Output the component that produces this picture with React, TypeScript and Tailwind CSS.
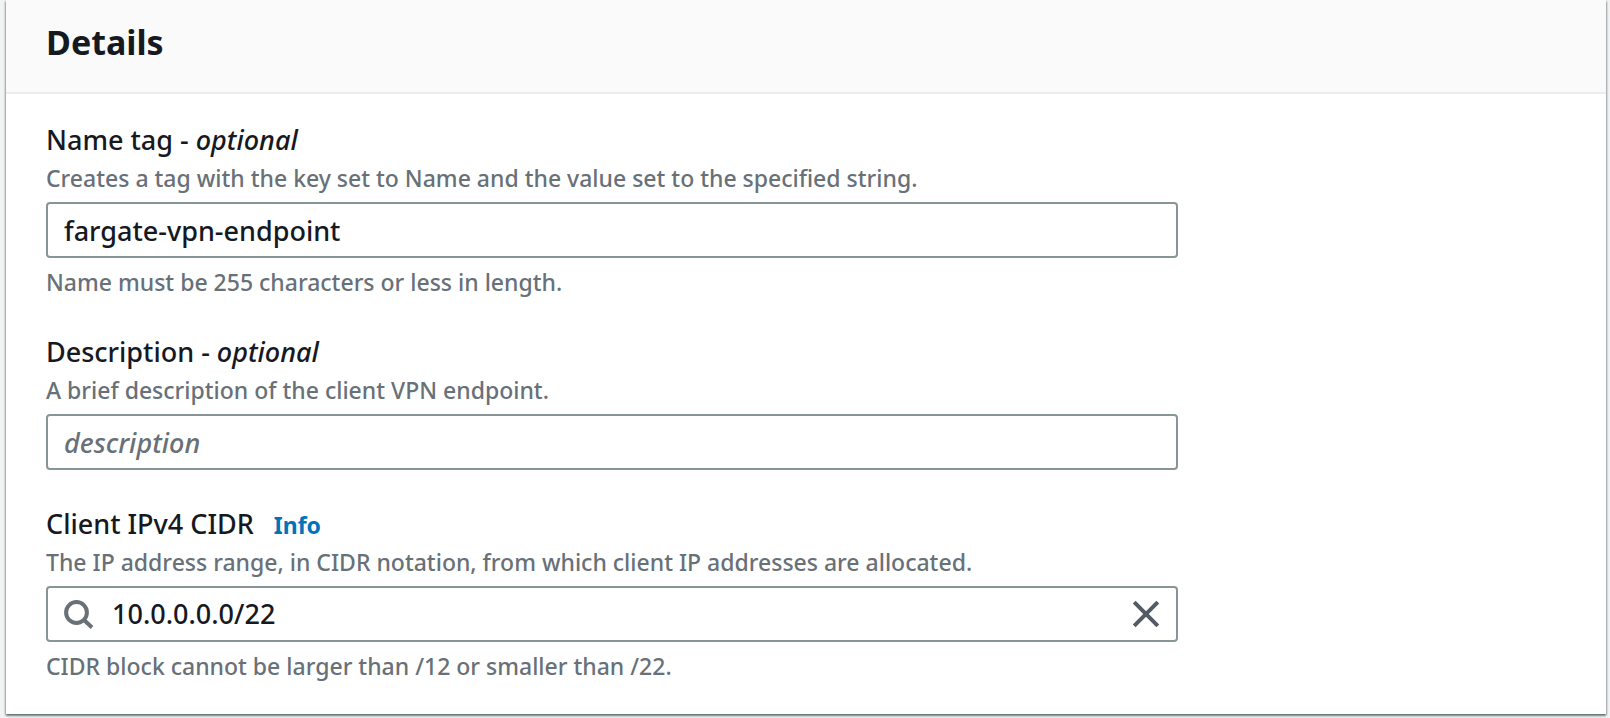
import { useState, type ReactNode } from "react";

const inputClass =
  "h-14 w-full rounded-[4px] border-2 border-[#879596] bg-white px-4 text-[27px] leading-9 font-medium text-[#16191f] outline-none placeholder:italic placeholder:text-[#687078] placeholder:opacity-100 focus:border-[#00a1c9]";

function SearchIcon() {
  return (
    <svg viewBox="0 0 32 32" className="size-8" fill="none" stroke="#687078" strokeWidth="4" aria-hidden="true">
      <circle cx="12.5" cy="14.5" r="10.4" />
      <path d="M19.5 21.5l8.5 8" />
    </svg>
  );
}

function CloseIcon() {
  return (
    <svg viewBox="0 0 32 32" className="size-8" fill="none" stroke="#545b64" strokeWidth="4" aria-hidden="true">
      <path d="M6.2 4.2l23.6 23.6M29.8 4.2L6.2 27.8" />
    </svg>
  );
}

type FieldProps = {
  id: string;
  label: string;
  optional?: boolean;
  info?: boolean;
  hint: string;
  constraint?: string;
  children: ReactNode;
};

function Field({ id, label, optional, info, hint, constraint, children }: FieldProps) {
  return (
    <div className="flex flex-col">
      <div className="flex h-11 items-baseline gap-5 leading-[44px]">
        <label htmlFor={id} className="text-[27px] font-medium text-[#16191f]">
          {label}
          {optional && (
            <>
              {" - "}
              <i>optional</i>
            </>
          )}
        </label>
        {info && (
          <a href="#info" className="text-[23px] font-bold text-[#0073bb] hover:underline">
            Info
          </a>
        )}
      </div>
      <p className="mb-2 text-[23px] leading-8 font-medium text-[#687078]">{hint}</p>
      {children}
      {constraint && (
        <p className="mt-2 text-[23px] leading-8 font-medium text-[#687078]">{constraint}</p>
      )}
    </div>
  );
}

export default function App() {
  const [name, setName] = useState("fargate-vpn-endpoint");
  const [description, setDescription] = useState("");
  const [cidr, setCidr] = useState("10.0.0.0.0/22");

  return (
    <main className="min-h-screen bg-[#f2f3f3] pr-1 pb-1 pl-1.5 font-['Noto_Sans',sans-serif]">
      <section className="bg-white shadow-[0_2px_2px_0_rgba(0,28,36,0.4),1px_1px_2px_0_rgba(0,28,36,0.25),-1px_1px_2px_0_rgba(0,28,36,0.25)]">
        <header className="border-b-2 border-[#eaeded] bg-[#fafafa] px-10 pt-5 pb-7">
          <h2 className="text-[34px] leading-[44px] font-bold text-[#16191f]">Details</h2>
        </header>
        <form className="px-10 pt-6 pb-8" onSubmit={(e) => e.preventDefault()}>
          <div className="flex w-3/4 flex-col gap-8 pr-2">
            <Field
              id="name-tag"
              label="Name tag"
              optional
              hint="Creates a tag with the key set to Name and the value set to the specified string."
              constraint="Name must be 255 characters or less in length."
            >
              <input
                id="name-tag"
                type="text"
                className={inputClass}
                value={name}
                onChange={(e) => setName(e.target.value)}
              />
            </Field>
            <Field
              id="description"
              label="Description"
              optional
              hint="A brief description of the client VPN endpoint."
            >
              <input
                id="description"
                type="text"
                placeholder="description"
                className={inputClass}
                value={description}
                onChange={(e) => setDescription(e.target.value)}
              />
            </Field>
            <Field
              id="cidr"
              label="Client IPv4 CIDR"
              info
              hint="The IP address range, in CIDR notation, from which client IP addresses are allocated."
              constraint="CIDR block cannot be larger than /12 or smaller than /22."
            >
              <div className="flex h-14 items-center rounded-[4px] border-2 border-[#879596] bg-white px-4 focus-within:border-[#00a1c9]">
                <SearchIcon />
                <input
                  id="cidr"
                  type="text"
                  className="min-w-0 flex-1 bg-transparent px-4 text-[27px] leading-9 font-medium text-[#16191f] outline-none"
                  value={cidr}
                  onChange={(e) => setCidr(e.target.value)}
                />
                <button type="button" aria-label="Clear" onClick={() => setCidr("")}>
                  <CloseIcon />
                </button>
              </div>
            </Field>
          </div>
        </form>
      </section>
    </main>
  );
}
